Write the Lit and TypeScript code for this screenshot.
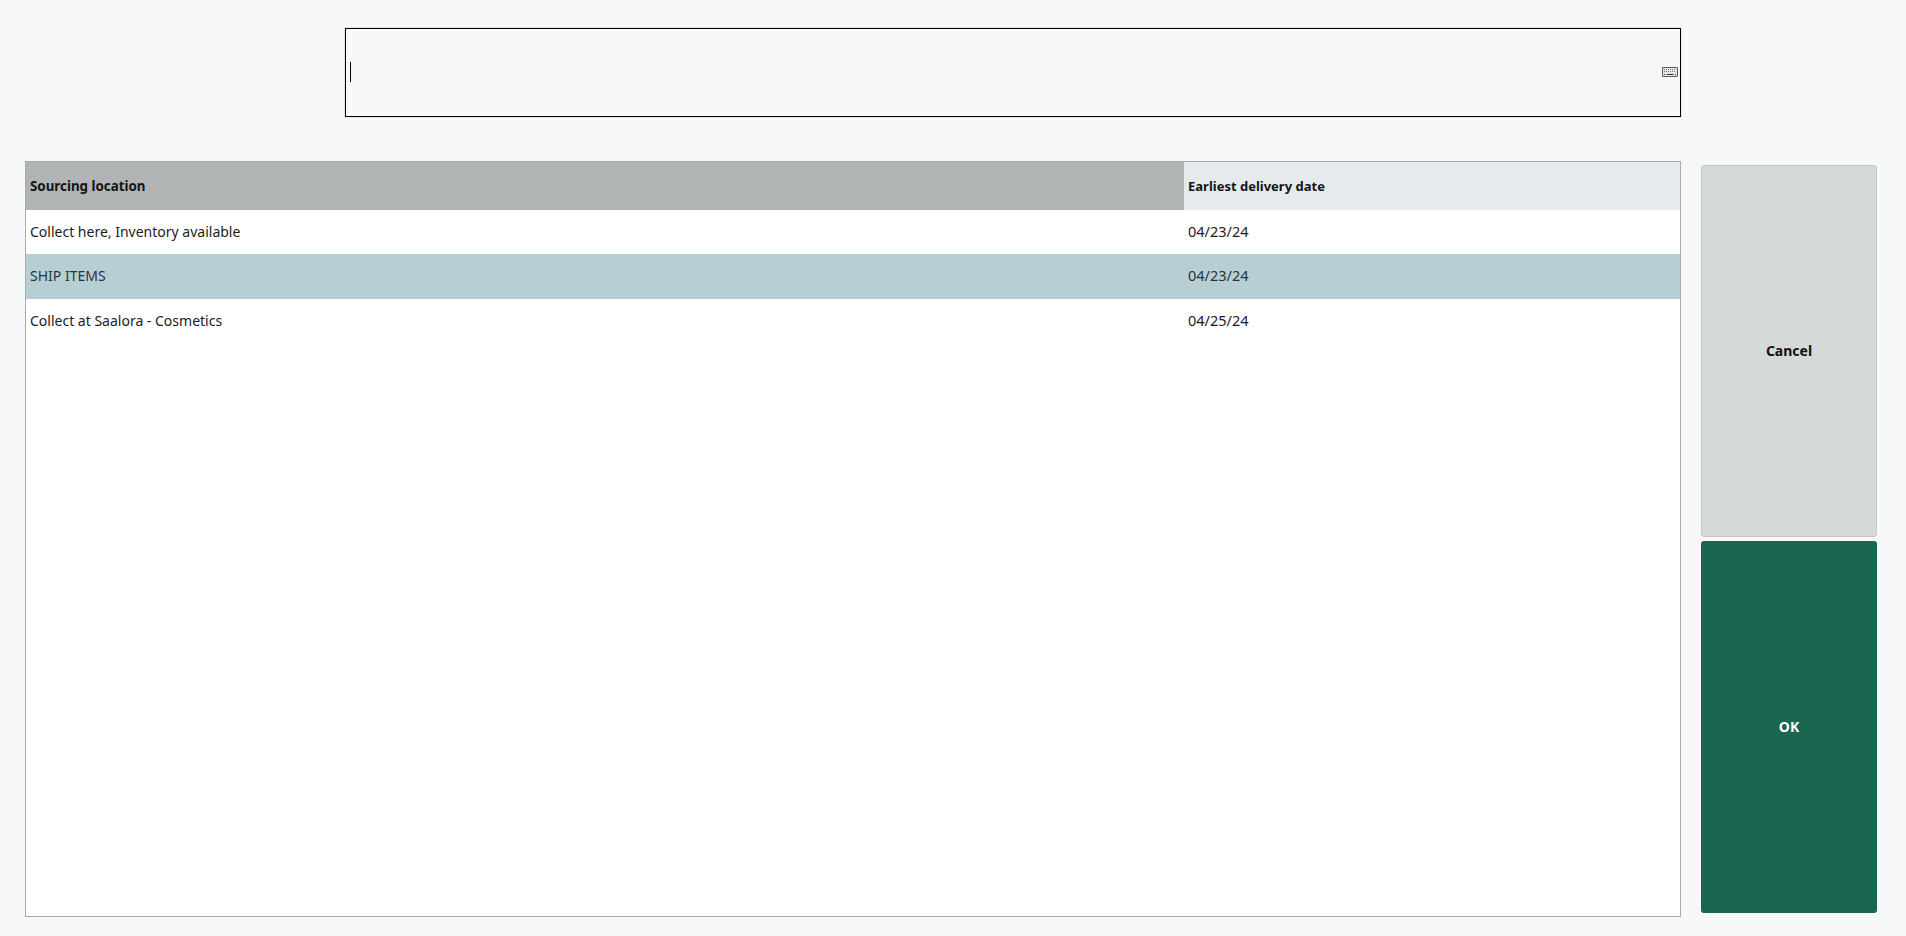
import { LitElement, html, css } from "lit";
import { customElement } from "lit/decorators.js";

const rows = [
  { name: "Collect here, Inventory available", date: "04/23/24", sel: false },
  { name: "SHIP ITEMS", date: "04/23/24", sel: true },
  { name: "Collect at Saalora - Cosmetics", date: "04/25/24", sel: false },
];

@customElement("app-root")
export class AppRoot extends LitElement {
  static styles = css`
    :host {
      display: block;
      width: 1906px;
      height: 936px;
      overflow: hidden;
      background: #f7f8fa;
      font-family: "Noto Sans", "Open Sans", sans-serif;
      font-size: 14px;
      color: #1c1c1c;
      position: relative;
      isolation: isolate;
    }
    .page {
      box-sizing: border-box;
      height: 936px;
      padding: 28px 29px 19px 25px;
      display: flex;
      flex-direction: column;
      gap: 44px;
    }
    .input-row {
      margin-left: 320px;
      width: 1336px;
      height: 89px;
      box-sizing: border-box;
      border: 1px solid #000;
      outline: 1px solid #e3e4e6;
      display: flex;
      align-items: center;
      justify-content: space-between;
      padding: 0 2px 1px 4px;
      position: relative;
    }
    .caret {
      width: 1px;
      height: 20px;
      background: #000;
    }
    .ghost {
      position: absolute;
      left: 1313px;
      top: -19px;
      width: 62px;
      height: 93px;
      background: #f8f8f8;
      z-index: -1;
    }
    .kb {
      display: block;
      width: 16px;
      height: 10px;
    }
    .main {
      flex: 1;
      display: flex;
      gap: 20px;
      min-height: 0;
    }
    .table {
      box-sizing: border-box;
      width: 1656px;
      height: 756px;
      border: 1px solid #a9abab;
      background: #fff;
      display: flex;
      flex-direction: column;
    }
    .row {
      display: grid;
      grid-template-columns: 1158px 1fr;
      height: 44.4px;
      flex: none;
    }
    .row > div {
      display: flex;
      align-items: center;
      padding-left: 4px;
      padding-bottom: 1px;
    }
    .row > .date {
      font-size: 14.5px;
      padding-bottom: 2px;
    }
    .row.sel > div {
      padding-bottom: 2px;
    }
    .row.sel > .date {
      padding-bottom: 3px;
    }
    .row.head {
      height: 48px;
      font-weight: 700;
      font-size: 13.35px;
      color: #141414;
    }
    .head .a { background: #b0b4b4; }
    .head .b { background: #e5eaec; font-size: 13px; }
    .row.sel { background: #b8ced5; color: #27343a; }
    .side {
      width: 176px;
      padding-top: 4px;
      height: 748px;
      display: flex;
      flex-direction: column;
      gap: 4px;
    }
    .btn {
      box-sizing: border-box;
      width: 176px;
      border-radius: 3px;
      font-weight: 700;
      font-size: 14px;
      display: flex;
      align-items: center;
      justify-content: center;
      padding-bottom: 2px;
    }
    .cancel {
      height: 372px;
      background: #d6d9da;
      border: 1px solid #c5c8c9;
      color: #111;
    }
    .ok {
      height: 372px;
      background: #1b6650;
      color: #fff;
    }
  `;

  render() {
    return html`
      <div class="page">
        <div class="input-row">
          <div class="ghost"></div>
          <div class="caret"></div>
          <svg class="kb" viewBox="0 0 16 10" aria-hidden="true">
            <rect x="0.5" y="0.5" width="15" height="9" rx="0.5" fill="#e6e6e6" stroke="#5c5c5c"></rect>
            <path d="M2 2.5h12M2 4.5h12" stroke="#777" stroke-width="1" stroke-dasharray="1 1"></path>
            <path d="M2 7.5h1M4.5 7.5h7M13 7.5h1" stroke="#333" stroke-width="1"></path>
          </svg>
        </div>
        <div class="main">
          <div class="table">
            <div class="row head">
              <div class="a">Sourcing location</div>
              <div class="b">Earliest delivery date</div>
            </div>
            ${rows.map(
              (r) => html`<div class="row ${r.sel ? "sel" : ""}">
                <div>${r.name}</div>
                <div class="date">${r.date}</div>
              </div>`
            )}
          </div>
          <div class="side">
            <div class="btn cancel">Cancel</div>
            <div class="btn ok">OK</div>
          </div>
        </div>
      </div>
    `;
  }
}
